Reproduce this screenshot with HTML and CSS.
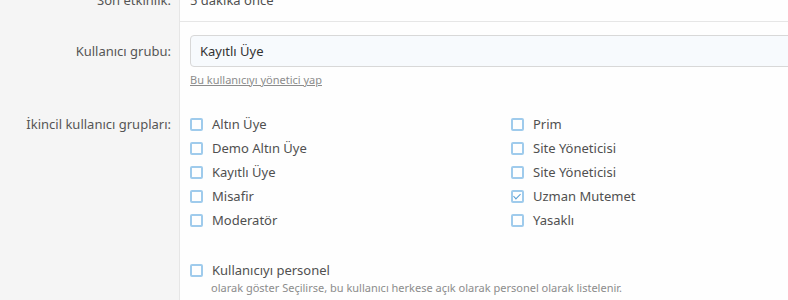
FILE: index.html
```html
<!DOCTYPE html>
<html lang="tr">
<head>
    <meta charset="UTF-8">
    <meta name="viewport" content="width=device-width, initial-scale=1.0">
    <title>Kullanıcı düzenle</title>
    <link rel="stylesheet" href="styles.css">
</head>
<body>

    <div class="form">
        <div class="row row-first">
            <div class="label">Son etkinlik:</div>
            <div class="field field-sep">5 dakika önce</div>
        </div>

        <div class="row">
            <div class="label label-input">Kullanıcı grubu:</div>
            <div class="field">
                <div class="input">Kayıtlı Üye</div>
                <a class="hint-link" href="#">Bu kullanıcıyı yönetici yap</a>
            </div>
        </div>

        <div class="row">
            <div class="label label-list">İkincil kullanıcı grupları:</div>
            <div class="field">
                <ul class="checks">
                    <li><span class="box"></span>Altın Üye</li>
                    <li><span class="box"></span>Prim</li>
                    <li><span class="box"></span>Demo Altın Üye</li>
                    <li><span class="box"></span>Site Yöneticisi</li>
                    <li><span class="box"></span>Kayıtlı Üye</li>
                    <li><span class="box"></span>Site Yöneticisi</li>
                    <li><span class="box"></span>Misafir</li>
                    <li><span class="box checked"></span>Uzman Mutemet</li>
                    <li><span class="box"></span>Moderatör</li>
                    <li><span class="box"></span>Yasaklı</li>
                </ul>
            </div>
        </div>

        <div class="row">
            <div class="label"></div>
            <div class="field field-staff">
                <div class="check-line"><span class="box"></span>Kullanıcıyı personel</div>
                <div class="explain">olarak göster Seçilirse, bu kullanıcı herkese açık olarak personel olarak listelenir.</div>
            </div>
        </div>
    </div>

</body>
</html>
```

FILE: styles.css
```css
body {
    margin: 0;
    padding: 0;
    font-family: "Noto Sans", "Open Sans", sans-serif;
    font-size: 13px;
    color: #505050;
    background-color: #fefefe;
    overflow: hidden;
}
.form {
    margin-top: -17px; /* sayfa biraz kaydırılmış */
    width: 900px;
}
.row {
    display: grid;
    grid-template-columns: 180px 1fr;
}
.label {
    background-color: #f5f5f5;
    border-right: 1px solid #e6e6e6;
    text-align: right;
    padding-right: 8px;
    color: #555;
}
.row-first .label {
    padding-top: 8px;
}
.field {
    padding-left: 10px;
}
.field-sep {
    padding-top: 8px;
    padding-bottom: 12px;
    border-bottom: 1px solid #e6e6e6;
}
.label-input {
    padding-top: 20px;
}
.row:nth-child(2) .field {
    padding-top: 13px;
}
.input {
    height: 30px;
    line-height: 30px;
    padding: 0 9px;
    background-color: #f7fafd;
    border: 1px solid #d8d8d8;
    border-radius: 4px;
    color: #333;
    font-size: 13px;
}
.hint-link {
    display: inline-block;
    margin-top: 5px;
    font-size: 11px;
    color: #8c8c8c;
}
.label-list {
    padding-top: 27px;
}
.checks {
    list-style: none;
    margin: 0;
    padding: 27px 0 0;
    display: grid;
    grid-template-columns: 321px 321px;
    row-gap: 6px;
}
.checks li,
.check-line {
    display: flex;
    align-items: center;
    height: 18px;
}
.box {
    width: 9px;
    height: 9px;
    border: 2px solid #9fcbec;
    border-radius: 2px;
    margin-right: 9px;
    position: relative;
    flex-shrink: 0;
}
.box.checked::after {
    content: "";
    position: absolute;
    left: 2px;
    top: 0px;
    width: 3px;
    height: 6px;
    border: solid #5a9fd4;
    border-width: 0 1.5px 1.5px 0;
    transform: rotate(45deg);
}
.field-staff {
    padding-top: 32px;
    padding-bottom: 20px;
}
.explain {
    padding-left: 21px;
    font-size: 11px;
    color: #8c8c8c;
    margin-top: 1px;
}
```
